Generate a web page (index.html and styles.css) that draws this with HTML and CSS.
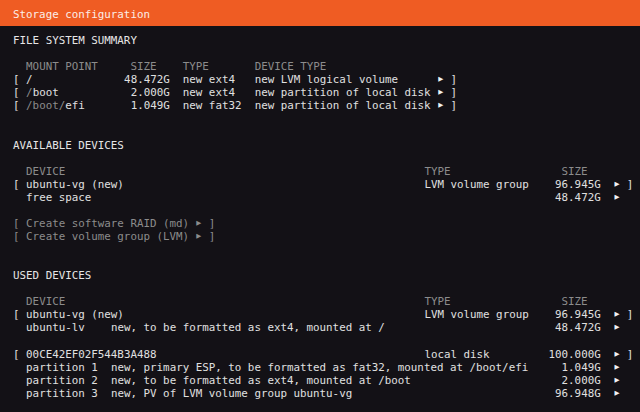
FILE: index.html
```html
<!DOCTYPE html>
<html lang="en">
<head>
<meta charset="utf-8">
<title>Storage configuration</title>
<link rel="stylesheet" href="styles.css">
</head>
<body>
<div class="screen">
  <header class="titlebar">Storage configuration</header>
  <main class="content">
    <section class="section">
      <h2 class="heading">FILE SYSTEM SUMMARY</h2>
      <div class="table">
        <div class="fs-row head"><span></span><span>MOUNT POINT</span><span class="size-h">SIZE</span><span>TYPE</span><span>DEVICE TYPE</span><span></span></div>
        <div class="fs-row"><span>[</span><span>/</span><span class="size">48.472G</span><span>new ext4</span><span>new LVM logical volume</span><span class="act"><span class="tri">▶</span> ]</span></div>
        <div class="fs-row"><span>[</span><span><span class="dim">/</span>boot</span><span class="size">2.000G</span><span>new ext4</span><span>new partition of local disk</span><span class="act"><span class="tri">▶</span> ]</span></div>
        <div class="fs-row"><span>[</span><span><span class="dim">/boot/</span>efi</span><span class="size">1.049G</span><span>new fat32</span><span>new partition of local disk</span><span class="act"><span class="tri">▶</span> ]</span></div>
      </div>
    </section>

    <section class="section">
      <h2 class="heading">AVAILABLE DEVICES</h2>
      <div class="table">
        <div class="dev-row head"><span></span><span class="span2">DEVICE</span><span>TYPE</span><span class="size-h">SIZE</span><span></span></div>
        <div class="dev-row"><span>[</span><span class="span2">ubuntu-vg (new)</span><span>LVM volume group</span><span class="size">96.945G</span><span class="act"><span class="tri">▶</span> ]</span></div>
        <div class="dev-row"><span></span><span class="span2">free space</span><span></span><span class="size">48.472G</span><span class="act"><span class="tri">▶</span></span></div>
      </div>
      <ul class="actions">
        <li class="action">[ Create software RAID (md) <span class="tri">▶</span> ]</li>
        <li class="action">[ Create volume group (LVM) <span class="tri">▶</span> ]</li>
      </ul>
    </section>

    <section class="section">
      <h2 class="heading">USED DEVICES</h2>
      <div class="table">
        <div class="dev-row head"><span></span><span class="span2">DEVICE</span><span>TYPE</span><span class="size-h">SIZE</span><span></span></div>
        <div class="group">
          <div class="dev-row"><span>[</span><span class="span2">ubuntu-vg (new)</span><span>LVM volume group</span><span class="size">96.945G</span><span class="act"><span class="tri">▶</span> ]</span></div>
          <div class="dev-row"><span></span><span>ubuntu-lv</span><span class="span2">new, to be formatted as ext4, mounted at /</span><span class="size">48.472G</span><span class="act"><span class="tri">▶</span></span></div>
        </div>
        <div class="group">
          <div class="dev-row"><span>[</span><span class="span2">00CE42EF02F544B3A488</span><span>local disk</span><span class="size">100.000G</span><span class="act"><span class="tri">▶</span> ]</span></div>
          <div class="dev-row"><span></span><span>partition 1</span><span class="span2">new, primary ESP, to be formatted as fat32, mounted at /boot/efi</span><span class="size">1.049G</span><span class="act"><span class="tri">▶</span></span></div>
          <div class="dev-row"><span></span><span>partition 2</span><span class="span2">new, to be formatted as ext4, mounted at /boot</span><span class="size">2.000G</span><span class="act"><span class="tri">▶</span></span></div>
          <div class="dev-row"><span></span><span>partition 3</span><span class="span2">new, PV of LVM volume group ubuntu-vg</span><span class="size">96.948G</span><span class="act"><span class="tri">▶</span></span></div>
        </div>
      </div>
    </section>
  </main>
</div>
</body>
</html>
```

FILE: styles.css
```css
:root {
  --cw: 6.53px;
  --lh: 13.07px;
  --bg: #131116;
  --fg: #e0e0e0;
  --dim: #8c8c8c;
  --orange: #ef5c23;
}

* {
  box-sizing: border-box;
}

html,
body {
  margin: 0;
  padding: 0;
  background: var(--bg);
}

.screen {
  width: 640px;
  height: 412px;
  overflow: hidden;
  background: var(--bg);
  color: var(--fg);
  font-family: "DejaVu Sans Mono", "Liberation Mono", monospace;
  font-size: 10.84px;
  letter-spacing: 0;
  line-height: var(--lh);
  white-space: nowrap;
}

.titlebar {
  height: 26px;
  padding: 7.5px 0 0 calc(var(--cw) * 2);
  background: var(--orange);
  color: #fbeee8;
}

.content {
  padding: 8px 0 0 calc(var(--cw) * 2);
}

.section {
  margin-bottom: calc(var(--lh) * 2);
}

.heading {
  margin: 0 0 var(--lh);
  font: inherit;
  height: var(--lh);
  color: #e6e6e6;
}

.table {
  display: flex;
  flex-direction: column;
}

.fs-row,
.dev-row {
  display: grid;
  height: var(--lh);
}

.fs-row {
  grid-template-columns:
    calc(var(--cw) * 2)
    calc(var(--cw) * 15)
    calc(var(--cw) * 9)
    calc(var(--cw) * 11)
    calc(var(--cw) * 28)
    auto;
}

.dev-row {
  grid-template-columns:
    calc(var(--cw) * 2)
    calc(var(--cw) * 13)
    calc(var(--cw) * 48)
    calc(var(--cw) * 19)
    calc(var(--cw) * 8)
    auto;
}

.span2 {
  grid-column: span 2;
}

.head {
  color: var(--dim);
}

.fs-row .size {
  text-align: right;
  padding-right: calc(var(--cw) * 2);
}

.fs-row .size-h {
  padding-left: var(--cw);
}

.dev-row .size {
  text-align: right;
}

.dev-row .size-h {
  padding-left: calc(var(--cw) * 2);
}

.act {
  white-space: pre;
}

.dev-row .act {
  padding-left: calc(var(--cw) * 2);
}

.group + .group {
  margin-top: var(--lh);
}

.dim {
  color: var(--dim);
}

.tri {
  display: inline-block;
  width: var(--cw);
  height: var(--lh);
  vertical-align: top;
  text-align: center;
  font-family: "DejaVu Sans", sans-serif;
  font-size: 6.5px;
  letter-spacing: 0;
  line-height: var(--lh);
  color: #f2f2f2;
}

.actions {
  list-style: none;
  margin: var(--lh) 0 0;
  padding: 0;
  color: var(--dim);
}

.action {
  height: var(--lh);
  white-space: pre;
}

.action .tri {
  color: var(--dim);
}
```
